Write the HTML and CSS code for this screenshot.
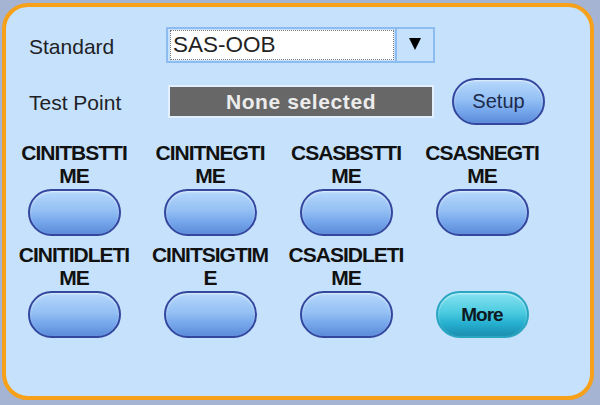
FILE: index.html
```html
<!DOCTYPE html>
<html>
<head>
<meta charset="utf-8">
<link rel="stylesheet" href="styles.css">
</head>
<body>
<div class="panel">
  <div class="row row-std">
    <div class="label">Standard</div>
    <div class="select">
      <div class="field">SAS-OOB</div>
      <div class="arrow"><span class="tri"></span></div>
    </div>
  </div>
  <div class="row row-tp">
    <div class="label label-tp">Test Point</div>
    <div class="tpbox">None selected</div>
    <button class="pill setup">Setup</button>
  </div>
  <div class="grid">
    <div class="cell"><div class="cap">CINITBSTTI<br>ME</div><button class="pill btn"></button></div>
    <div class="cell"><div class="cap">CINITNEGTI<br>ME</div><button class="pill btn"></button></div>
    <div class="cell"><div class="cap">CSASBSTTI<br>ME</div><button class="pill btn"></button></div>
    <div class="cell"><div class="cap">CSASNEGTI<br>ME</div><button class="pill btn"></button></div>
    <div class="cell"><div class="cap">CINITIDLETI<br>ME</div><button class="pill btn"></button></div>
    <div class="cell"><div class="cap">CINITSIGTIM<br>E</div><button class="pill btn"></button></div>
    <div class="cell"><div class="cap">CSASIDLETI<br>ME</div><button class="pill btn"></button></div>
    <div class="cell"><div class="cap"><br></div><button class="pill more">More</button></div>
  </div>
</div>
</body>
</html>
```
FILE: styles.css
```css
html, body {
  margin: 0;
  padding: 0;
}
body {
  width: 600px;
  height: 405px;
  background: #a4b4d2;
  font-family: "Liberation Sans", Arial, sans-serif;
  overflow: hidden;
}
.panel {
  box-sizing: border-box;
  width: 592px;
  height: 397px;
  margin: 3px 0 0 2px;
  border: 4px solid #f7a01a;
  border-radius: 26px;
  background: #c6e1fb;
  padding-top: 20px;
}
.row {
  display: flex;
  align-items: center;
  padding-left: 23px;
}
.row-std {
  height: 36px;
}
.label {
  width: 137px;
  font-size: 21px;
  color: #1e2226;
  padding-top: 3px;
}
.label-tp {
  width: 139px;
}
.select {
  box-sizing: border-box;
  width: 269px;
  height: 36px;
  display: flex;
  border: 2px solid #8cbcf0;
}
.field {
  flex: 1;
  margin: 1px 1px 1px 2px;
  background: #fff;
  border: 1px dotted #7a7a7a;
  font-size: 22.5px;
  color: #222;
  line-height: 28px;
  padding-left: 2px;
}
.arrow {
  width: 36px;
  border-left: 2px solid #8cbcf0;
  display: flex;
  align-items: center;
  justify-content: center;
}
.tri {
  width: 0;
  height: 0;
  border-left: 6px solid transparent;
  border-right: 6px solid transparent;
  border-top: 12px solid #000;
  margin-top: -2px;
}
.row-tp {
  margin-top: 15px;
  height: 47px;
}
.tpbox {
  box-sizing: border-box;
  width: 266px;
  height: 33px;
  background: #676767;
  border: 2px solid #e2effc;
  color: #ececec;
  font-weight: bold;
  font-size: 21px;
  letter-spacing: 0.6px;
  text-align: center;
  line-height: 29px;
}
.pill {
  box-sizing: border-box;
  width: 93px;
  height: 47px;
  border-radius: 24px;
  border: 2px solid #34479f;
  background: linear-gradient(#b6d8fb 0%, #94c0f4 45%, #78a8ec 70%, #5b8bd8 100%);
  box-shadow: inset 0 1px 2px rgba(255, 255, 255, 0.6);
  padding: 0;
  font-family: "Liberation Sans", Arial, sans-serif;
  display: block;
}
.setup {
  margin-left: 18px;
  font-size: 20px;
  color: #1c2a4c;
}
.grid {
  margin-top: 16px;
  display: grid;
  grid-template-columns: repeat(4, 136px);
  row-gap: 7px;
}
.cell {
  display: flex;
  flex-direction: column;
  align-items: center;
}
.cap {
  font-weight: bold;
  font-size: 21px;
  line-height: 23px;
  letter-spacing: -1px;
  text-align: center;
  color: #111;
  height: 46px;
  margin-bottom: 2px;
}
.more {
  border: 2px solid #2aa6c2;
  background: linear-gradient(#86e2f0 0%, #4ccbe0 45%, #26b0d0 70%, #1a8eb0 100%);
  font-weight: bold;
  font-size: 19px;
  letter-spacing: -1px;
  color: #0e1a22;
}
```
